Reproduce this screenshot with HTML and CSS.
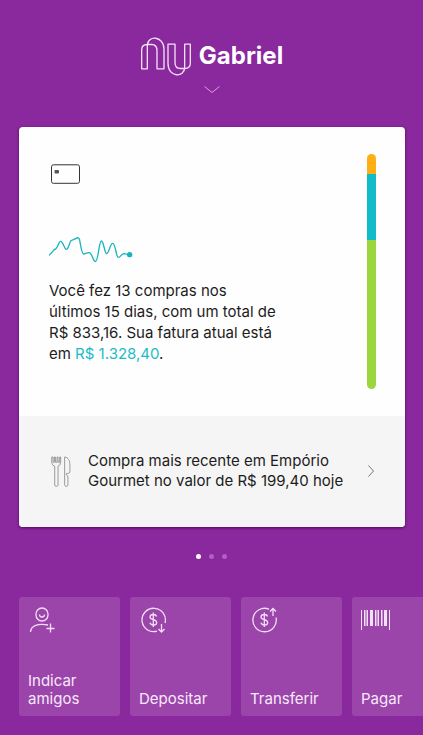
FILE: index.html
```html
<!DOCTYPE html>
<html lang="pt-BR">
<head>
<meta charset="utf-8">
<meta name="viewport" content="width=device-width, initial-scale=1">
<title>Nu</title>
<link rel="stylesheet" href="styles.css">
</head>
<body>
<header class="header">
  <h1 class="brand">
    <svg class="logo" viewBox="57 47 156 116" aria-hidden="true">
      <path id="arch" d="M62 142V86Q62 69 78 69H92Q108 69 108 88V142H129V84C129 41 79 41 79 72V142Z"/>
      <use href="#arch" transform="rotate(180 135 105)"/>
    </svg>
    <span>Gabriel</span>
  </h1>
  <button class="expand" type="button" aria-label="Abrir menu">
    <svg viewBox="0 0 16 8"><path d="M.5 .5L8 6.5L15.5 .5"/></svg>
  </button>
</header>

<main class="card">
  <section class="summary">
    <div class="summary-body">
      <svg class="card-icon" viewBox="0 0 30 20" aria-hidden="true">
        <rect class="card-frame" x=".5" y=".8" width="28" height="18.5" rx="2"/>
        <rect x="3.5" y="6" width="4.5" height="3.5" rx="1"/>
      </svg>
      <svg class="trend" viewBox="117 348 252 81" aria-hidden="true">
        <path d="M118 405L131 391Q133 388 137 387C143 385 146 364 152 364C159 364 163 388 169 388C176 388 178 368 183 362C187 359 193 360 198 355C204 352 207 352 209 360C213 382 215 402 221 402C227 401 230 398 237 398C247 398 249 425 256 425C265 425 267 363 274 363C282 363 283 401 290 401C297 401 300 370 308 370C317 370 318 412 325 412C332 412 334 401 342 401Q350 402 358 404"/>
        <circle cx="359" cy="404" r="8"/>
      </svg>
      <p class="summary-text">Você fez 13 compras nos<br>últimos 15 dias, com um total de<br>R$ 833,16. Sua fatura atual está<br>em <span class="amount">R$ 1.328,40</span>.</p>
    </div>
    <div class="limit-bar">
      <span class="future"></span>
      <span class="current"></span>
      <span class="available"></span>
    </div>
  </section>
  <a class="latest" href="#compras">
    <svg class="cutlery" viewBox="122 165 60 94" aria-hidden="true">
      <path d="M124 168V184Q124 194 133 196V253Q133 257 138 257T143 253V196Q151 194 151 184V168H148V184H143V168H140V184H135V168H132V184H128V168Z"/>
      <path d="M163 168C174 169 179 179 179 192V213Q179 218 172 218H168V222Q173 223 173 229V252Q173 257 168 257T163 252Z"/>
    </svg>
    <span class="latest-text">Compra mais recente em Empório<br>Gourmet no valor de R$ 199,40 hoje</span>
    <svg class="arrow" viewBox="0 0 6 12" aria-hidden="true"><path d="M.5 .5L5.5 6L.5 11.5"/></svg>
  </a>
</main>

<div class="dots" aria-hidden="true">
  <span class="dot active"></span><span class="dot"></span><span class="dot"></span>
</div>

<nav class="actions" aria-label="Ações">
  <button class="action" type="button">
    <svg viewBox="0 0 30 26">
      <rect x="7" y="1" width="12" height="13" rx="6"/>
      <path d="M10.5 7.5Q10.5 10 13 10T15.5 7.5M1.5 25C2 18 9 16.5 19 18M21.5 16.5V25.5M17.5 21.5H25.5"/>
    </svg>
    <span>Indicar<br>amigos</span>
  </button>
  <button class="action" type="button">
    <svg viewBox="0 0 30 26">
      <path d="M17 24.2A11.7 11.7 0 1 1 25 16M21.5 17V25M18.5 22L21.5 25L24.5 22"/>
      <path d="M16.5 9.5Q16 7.5 13.3 7.5Q10 7.5 10 10Q10 12 13.3 12.7Q16.7 13.5 16.7 15.7Q16.7 18 13.3 18Q10.5 18 10 15.7M13.3 5.5V20"/>
    </svg>
    <span>Depositar</span>
  </button>
  <button class="action" type="button">
    <svg viewBox="0 0 30 26">
      <path d="M18 2.2A11.7 11.7 0 1 0 25 10.5M22 9V1.5M19 4.500L22 1.5L25 4.500"/>
      <path d="M16.5 9.5Q16 7.5 13.3 7.5Q10 7.5 10 10Q10 12 13.3 12.7Q16.7 13.5 16.7 15.7Q16.7 18 13.3 18Q10.5 18 10 15.7M13.3 5.5V20"/>
    </svg>
    <span>Transferir</span>
  </button>
  <button class="action" type="button">
    <svg class="barcode" viewBox="0 0 30 26">
      <path d="M0 3h1v20H0zM3 3h1.500v16H3zM5.500 3h1.500v16H5.500zM9 3h3v16H9zM14 3h1.500v16H14zM16.500 3h1.500v16h-1.500zM20 3h1.500v16H20zM23 3h3v16h-3zM28 3h1v20h-1z"/>
    </svg>
    <span>Pagar</span>
  </button>
</nav>
</body>
</html>
```
FILE: styles.css
```css
* {
  box-sizing: border-box;
}

body {
  margin: 0;
  background: #8a289d;
  color: #1c1c1c;
  font-family: Inter, "Liberation Sans", sans-serif;
  font-size: 15px;
  overflow-x: hidden;
}

button {
  border: 0;
  padding: 0;
  background: none;
  color: inherit;
  font: inherit;
  text-align: left;
  cursor: pointer;
}

svg {
  display: block;
  flex: none;
  fill: none;
}

.header {
  display: flex;
  flex-direction: column;
  align-items: center;
  gap: 10px;
  padding-top: 36px;
  color: #fff;
}

.brand {
  display: flex;
  align-items: center;
  gap: 7px;
  margin: 0;
  font-size: 24px;
  line-height: 40px;
}

.logo {
  width: 52px;
  height: 39px;
  stroke: #f3e0f6;
  stroke-width: 4;
  stroke-linejoin: round;
}

.expand svg {
  width: 16px;
  height: 8px;
  stroke: #d3a6dc;
}

.card {
  margin: 33px 18px 0 19px;
  border-radius: 4px;
  overflow: hidden;
  background: #fefefe;
  box-shadow: 0 1px 3px #4e085f;
}

.summary {
  display: flex;
  justify-content: space-between;
  padding: 27px 29px 27px 30px;
}

.summary-body {
  padding-top: 10px;
}

.card-icon {
  width: 30px;
  height: 20px;
  margin-left: 2px;
  fill: #555;
}

.card-frame {
  fill: none;
  stroke: #333;
}

.trend {
  width: 84px;
  height: 27px;
  margin-top: 52px;
  stroke: #18b5bd;
  stroke-width: 4;
  stroke-linecap: round;
}

.trend circle {
  fill: #18b5bd;
  stroke: none;
}

.summary-text {
  margin: 17px 0 0;
  line-height: 21px;
}

.amount {
  color: #1cbcc5;
}

.limit-bar {
  display: flex;
  flex-direction: column;
  width: 9px;
  height: 235px;
  border-radius: 5px;
  overflow: hidden;
}

.future {
  flex: 20;
  background: #ffae13;
}

.current {
  flex: 66;
  background: #12bbca;
}

.available {
  flex: 149;
  background: #9bd63c;
}

.latest {
  display: flex;
  align-items: center;
  padding: 35px 31px 36px 32px;
  background: #f5f5f5;
  color: inherit;
  line-height: 20px;
  text-decoration: none;
  white-space: nowrap;
}

.cutlery {
  width: 20px;
  height: 31px;
  margin-right: 17px;
  stroke: #999;
  stroke-width: 3;
  stroke-linejoin: round;
}

.arrow {
  width: 6px;
  height: 12px;
  margin-left: auto;
  stroke: #777;
}

.dots {
  display: flex;
  justify-content: center;
  gap: 8px;
  margin-top: 27px;
}

.dot {
  width: 5px;
  height: 5px;
  border-radius: 50%;
  background: #b15fc1;
}

.dot.active {
  background: #fff;
}

.actions {
  display: flex;
  gap: 10px;
  margin-top: 38px;
  padding: 0 0 18px 19px;
  overflow: hidden;
}

.action {
  display: flex;
  flex: none;
  flex-direction: column;
  justify-content: space-between;
  width: 101px;
  height: 119px;
  padding: 10px 9px 8px;
  border-radius: 3px;
  background: #9b45ab;
  color: #f8e9fa;
  line-height: 18px;
}

.action svg {
  width: 30px;
  height: 26px;
  margin-left: 1px;
  stroke: #f3dff6;
  stroke-width: 1.3;
}

.action .barcode {
  margin-left: 0;
  fill: #f3dff6;
  stroke: none;
}
```
